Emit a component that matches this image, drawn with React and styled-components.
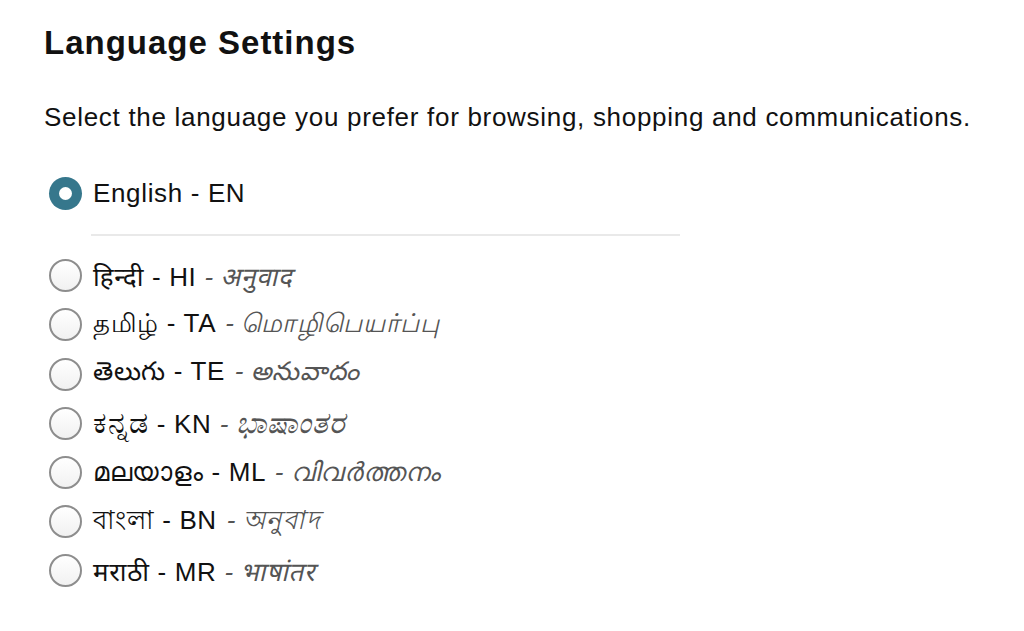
import React, { useState } from "react";
import styled, { createGlobalStyle } from "styled-components";

const Global = createGlobalStyle`
  html, body { margin: 0; padding: 0; background: #ffffff; }
  body { font-family: "Liberation Sans", Arial, "Noto Sans", sans-serif; color: #111111; }
`;

const Page = styled.div`
  padding: 21px 0 0 44px;
`;

const Title = styled.h1`
  margin: 0;
  font-size: 33px;
  font-weight: 700;
  line-height: 44px;
  letter-spacing: 1px;
  color: #111111;
`;

const Intro = styled.p`
  margin: 36px 0 0 0;
  font-size: 26px;
  line-height: 32px;
  letter-spacing: 0.7px;
  color: #111111;
`;

const OptionList = styled.div`
  display: flex;
  flex-direction: column;
  margin-top: 36px;
  margin-left: 5px;
`;

const Option = styled.label`
  display: flex;
  align-items: center;
  gap: 11px;
  height: 49.2px;
  cursor: pointer;
  font-size: 26px;
  letter-spacing: 0.65px;
  color: #111111;
`;

const Radio = styled.span`
  box-sizing: border-box;
  flex: 0 0 auto;
  width: 33px;
  height: 33px;
  border-radius: 50%;
  display: flex;
  align-items: center;
  justify-content: center;
  ${(p) =>
    p.$checked
      ? `background: #36778c; border: none;`
      : `background: linear-gradient(#ffffff, #f1f1f1); border: 2px solid #8d8d8d;`}
  &::after {
    content: "";
    display: ${(p) => (p.$checked ? "block" : "none")};
    width: 13px;
    height: 13px;
    border-radius: 50%;
    background: #ffffff;
  }
`;

const Label = styled.span`
  white-space: nowrap;
  display: flex;
  align-items: baseline;
`;

const Script = styled.span`
  font-size: ${(p) => p.$size || "1em"};
`;

const Translation = styled.span`
  display: inline-block;
  font-style: normal;
  color: #555555;
  margin-left: 0.3em;
  transform: skewX(-13deg);
  transform-origin: 0 70%;
`;

const Divider = styled.div`
  height: 2px;
  width: 589px;
  margin: 16px 0 15px 42px;
  background: #e9e9e9;
`;

const languages = [
  { native: "हिन्दी", code: "HI", word: "अनुवाद" },
  { native: "தமிழ்", code: "TA", word: "மொழிபெயர்ப்பு" },
  { native: "తెలుగు", code: "TE", word: "అనువాదం" },
  { native: "ಕನ್ನಡ", code: "KN", word: "ಭಾಷಾಂತರ", size: "1.15em" },
  { native: "മലയാളം", code: "ML", word: "വിവർത്തനം" },
  { native: "বাংলা", code: "BN", word: "অনুবাদ" },
  { native: "मराठी", code: "MR", word: "भाषांतर" },
];

export default function App() {
  const [selected, setSelected] = useState("EN");
  return (
    <Page>
      <Global />
      <Title>Language Settings</Title>
      <Intro>Select the language you prefer for browsing, shopping and communications.</Intro>
      <OptionList>
        <Option onClick={() => setSelected("EN")}>
          <Radio $checked={selected === "EN"} />
          <Label>English - EN</Label>
        </Option>
        <Divider />
        {languages.map((l) => (
          <Option key={l.code} onClick={() => setSelected(l.code)}>
            <Radio $checked={selected === l.code} />
            <Label>
              <Script $size={l.size}>{l.native}</Script>
              &nbsp;- {l.code}
              <Translation>
                - <Script $size={l.size}>{l.word}</Script>
              </Translation>
            </Label>
          </Option>
        ))}
      </OptionList>
    </Page>
  );
}
